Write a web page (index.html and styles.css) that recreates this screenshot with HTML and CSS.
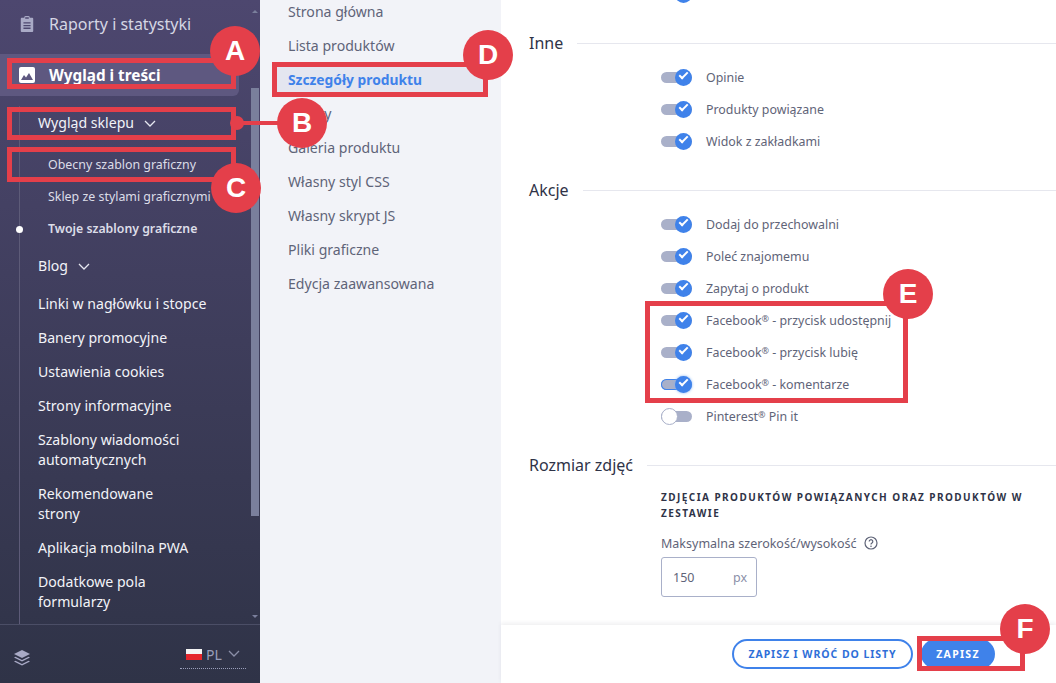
FILE: index.html
```html
<!DOCTYPE html>
<html lang="pl">

<head>
	<meta charset="UTF-8">
	<title>Wygląd i treści</title>
	<link rel="stylesheet" href="styles.css">
</head>

<body>
	<aside class="sidebar">
		<nav class="side-nav">
			<a class="main-link">
				<svg class="main-icon" viewBox="0 0 16 18"><path fill="#a9aac6" d="M2 2h3V1.500A1.500 1.500 0 0 1 6.500 0h3A1.500 1.500 0 0 1 11 1.500V2h3a1 1 0 0 1 1 1v14a1 1 0 0 1-1 1H2a1 1 0 0 1-1-1V3a1 1 0 0 1 1-1z"/><path fill="#4d476f" d="M4 7h8v1.500H4zM4 10h8v1.500H4zM4 13h8v1.500H4zM6 1.500h4V3H6z"/></svg>
				Raporty i statystyki
			</a>
			<a class="main-link active">
				<svg class="main-icon" viewBox="0 0 16 16"><rect width="16" height="16" rx="2" fill="#fff"/><path fill="#5e5880" d="M2 13l3-5 2 2.500L10 6l4 7z"/></svg>
				Wygląd i treści
			</a>
			<div class="tree">
				<a class="tree-link first">Wygląd sklepu <svg class="chev" viewBox="0 0 12 7"><path d="M1 1l5 5 5-5"/></svg></a>
				<div class="sub-list">
					<a class="sub-link">Obecny szablon graficzny</a>
					<a class="sub-link">Sklep ze stylami graficznymi</a>
					<a class="sub-link current">Twoje szablony graficzne</a>
				</div>
				<a class="tree-link blog">Blog <svg class="chev" viewBox="0 0 12 7"><path d="M1 1l5 5 5-5"/></svg></a>
				<a class="tree-link">Linki w nagłówku i stopce</a>
				<a class="tree-link">Banery promocyjne</a>
				<a class="tree-link">Ustawienia cookies</a>
				<a class="tree-link">Strony informacyjne</a>
				<a class="tree-link">Szablony wiadomości<br>automatycznych</a>
				<a class="tree-link">Rekomendowane<br>strony</a>
				<a class="tree-link">Aplikacja mobilna PWA</a>
				<a class="tree-link">Dodatkowe pola<br>formularzy</a>
			</div>
			<div class="scrollbar">
				<span class="arrow up"></span>
				<span class="thumb"></span>
				<span class="arrow down"></span>
			</div>
		</nav>
		<div class="side-foot">
			<svg class="layers" viewBox="0 0 16 16"><path fill="#a9aac6" d="M8 0l8 4-8 4-8-4z"/><path fill="#a9aac6" d="M1.500 6.700L8 10l6.500-3.300L16 7.500l-8 4-8-4z"/><path fill="#a9aac6" d="M1.500 10.700L8 14l6.500-3.300 1.500.8-8 4-8-4z"/></svg>
			<div class="lang">
				<span class="flag"></span>
				<span>PL</span>
				<svg class="chev dim" viewBox="0 0 12 7"><path d="M1 1l5 5 5-5"/></svg>
			</div>
		</div>
	</aside>

	<div class="subnav">
		<a class="subnav-link">Strona główna</a>
		<a class="subnav-link">Lista produktów</a>
		<a class="subnav-link active">Szczegóły produktu</a>
		<a class="subnav-link">Opłaty</a>
		<a class="subnav-link">Galeria produktu</a>
		<a class="subnav-link">Własny styl CSS</a>
		<a class="subnav-link">Własny skrypt JS</a>
		<a class="subnav-link">Pliki graficzne</a>
		<a class="subnav-link">Edycja zaawansowana</a>
	</div>

	<main class="content">
		<div class="form-area">
			<div class="toggle-row cut">
				<span class="toggle on"></span><span>Zakup</span>
			</div>

			<h2 class="section-title first">Inne</h2>
			<div class="toggle-row"><span class="toggle on"></span><span>Opinie</span></div>
			<div class="toggle-row"><span class="toggle on"></span><span>Produkty powiązane</span></div>
			<div class="toggle-row"><span class="toggle on"></span><span>Widok z zakładkami</span></div>

			<h2 class="section-title">Akcje</h2>
			<div class="toggle-row"><span class="toggle on"></span><span>Dodaj do przechowalni</span></div>
			<div class="toggle-row"><span class="toggle on"></span><span>Poleć znajomemu</span></div>
			<div class="toggle-row"><span class="toggle on"></span><span>Zapytaj o produkt</span></div>
			<div class="toggle-row"><span class="toggle on"></span><span>Facebook<span class="reg">®</span> - przycisk udostępnij</span></div>
			<div class="toggle-row"><span class="toggle on"></span><span>Facebook<span class="reg">®</span> - przycisk lubię</span></div>
			<div class="toggle-row"><span class="toggle on focus"></span><span>Facebook<span class="reg">®</span> - komentarze</span></div>
			<div class="toggle-row"><span class="toggle"></span><span>Pinterest<span class="reg">®</span> Pin it</span></div>

			<h2 class="section-title">Rozmiar zdjęć</h2>
			<div class="field">
				<h3 class="field-title">Zdjęcia produktów powiązanych oraz produktów w zestawie</h3>
				<label class="field-label">Maksymalna szerokość/wysokość
					<svg class="help" viewBox="0 0 14 14"><circle cx="7" cy="7" r="6" fill="none" stroke="#5f6478" stroke-width="1.200"/><path d="M5.200 5.500a1.800 1.800 0 1 1 2.700 1.600c-.6.300-.9.600-.9 1.300" fill="none" stroke="#5f6478" stroke-width="1.200"/><circle cx="7" cy="10.300" r=".8" fill="#5f6478"/></svg>
				</label>
				<div class="num-input"><span>150</span><span class="unit">px</span></div>
			</div>
		</div>
		<footer class="actions">
			<button class="btn outline">Zapisz i wróć do listy</button>
			<button class="btn solid">Zapisz</button>
		</footer>
	</main>

	<!-- annotations over the screenshot -->
	<div class="mark" style="left:7px;top:58px;width:229px;height:31px"></div>
	<div class="mark" style="left:7px;top:107px;width:229px;height:33px"></div>
	<div class="mark" style="left:7px;top:147px;width:229px;height:35px"></div>
	<div class="mark" style="left:272px;top:62px;width:216px;height:35px"></div>
	<div class="mark" style="left:645px;top:301px;width:263px;height:102px"></div>
	<div class="mark" style="left:917px;top:636px;width:108px;height:35px"></div>
	<div class="connector"></div>
	<div class="pin"></div>
	<div class="badge" style="left:210px;top:26px">A</div>
	<div class="badge" style="left:277px;top:98px">B</div>
	<div class="badge" style="left:211px;top:163px">C</div>
	<div class="badge" style="left:463px;top:30px">D</div>
	<div class="badge" style="left:883px;top:269px">E</div>
	<div class="badge" style="left:1000px;top:604px">F</div>
</body>

</html>
```

FILE: styles.css
```css
*,
*::before,
*::after {
	box-sizing: border-box;
}

html,
body {
	height: 100%;
}

body {
	margin: 0;
	display: flex;
	height: 683px;
	overflow: hidden;
	font-family: "Noto Sans", sans-serif;
	font-size: 13px;
	color: #5f6478;
	background-color: #fff;
	position: relative;
}

/* left menu */
.sidebar {
	width: 260px;
	flex: none;
	display: flex;
	flex-direction: column;
	background: linear-gradient(#4d476f, #2f3347);
	color: #f2f3f8;
}

.side-nav {
	flex: 1;
	position: relative;
	overflow: hidden;
	padding-top: 14px;
}

.main-link {
	display: flex;
	align-items: center;
	gap: 14px;
	height: 20px;
	padding-left: 19px;
	font-size: 16px;
	color: #d5d6e4;
}

.main-link.active {
	width: 239px;
	height: 42px;
	margin-top: 20px;
	background-color: #5e5880;
	border-radius: 0 6px 6px 0;
	font-size: 15.300px;
	color: #fff;
	font-weight: 700;
}

.main-icon {
	width: 16px;
	height: 16px;
}

.tree {
	margin: 10px 0 0 19px;
	padding-left: 18px;
	border-left: 1px solid #5d5b78;
	height: 520px;
	display: flex;
	flex-direction: column;
	gap: 14px;
}

.tree-link {
	display: block;
	line-height: 20px;
	font-size: 14.100px;
	color: #f2f3f8;
}

.tree-link.first {
	margin-top: 7px;
}

.tree-link.blog {
	margin-bottom: 4px;
}

.chev {
	width: 12px;
	height: 7px;
	margin: 0 0 1px 6px;
	fill: none;
	stroke: #e6e7f0;
	stroke-width: 1.300;
}

.chev.dim {
	stroke: #8b8fa8;
	margin-left: 2px;
}

.sub-list {
	display: flex;
	flex-direction: column;
	gap: 12px;
	margin-top: 8px;
	margin-bottom: 3px;
}

.sub-link {
	display: block;
	line-height: 20px;
	padding-left: 10px;
	font-size: 12.400px;
	color: #dcdde8;
	white-space: nowrap;
	position: relative;
}

.sub-link.current {
	font-weight: 600;
	font-size: 12.300px;
}

.sub-link.current::before {
	content: "";
	position: absolute;
	left: -22px;
	top: 7px;
	width: 7px;
	height: 7px;
	border-radius: 50%;
	background-color: #fff;
}

.scrollbar {
	position: absolute;
	top: 0;
	right: 0;
	bottom: 0;
	width: 9px;
}

.thumb {
	position: absolute;
	top: 88px;
	left: 0;
	width: 8px;
	height: 428px;
	background-color: #7a7f9c;
}

.arrow {
	position: absolute;
	left: 1px;
	border-left: 3px solid transparent;
	border-right: 3px solid transparent;
}

.arrow.up {
	top: 10px;
	border-bottom: 3px solid #7a7f9c;
}

.arrow.down {
	bottom: 6px;
	border-top: 3px solid #7a7f9c;
}

.side-foot {
	height: 59px;
	flex: none;
	border-top: 1px solid #4b4e66;
	display: flex;
	align-items: flex-start;
	justify-content: space-between;
	padding: 25px 14px 0 14px;
}

.layers {
	width: 16px;
	height: 16px;
}

.lang {
	width: 66px;
	height: 25px;
	display: flex;
	align-items: center;
	gap: 4px;
	padding: 0 0 4px 6px;
	margin-top: -6px;
	font-size: 14px;
	color: #9a9fbb;
	border-bottom: 1px dotted #9a9fbb;
}

.flag {
	width: 16px;
	height: 11px;
	background: linear-gradient(#f4f4f4 50%, #e5262c 50%);
}

/* second column */
.subnav {
	width: 241px;
	flex: none;
	display: flex;
	flex-direction: column;
	padding: 2px 15px 0 14px;
	background-color: #f2f3f8;
}

.subnav-link {
	height: 34px;
	line-height: 20px;
	padding: 0 14px;
	font-size: 14.100px;
	color: #5f6478;
}

.subnav-link.active {
	line-height: 34px;
	background-color: #e4e6f0;
	color: #3f82ea;
	font-size: 13.800px;
	font-weight: 700;
	margin: -7px 0 7px;
}

/* form */
.content {
	flex: 1;
	position: relative;
	display: flex;
	flex-direction: column;
	min-width: 0;
}

.form-area {
	flex: 1;
	padding: 0 0 0 28px;
	overflow: hidden;
	min-height: 0;
}

.section-title {
	display: flex;
	align-items: center;
	gap: 14px;
	margin: 21px 0 6px;
	height: 24px;
	font-size: 16px;
	font-weight: 400;
	color: #2f3347;
}

.section-title::after {
	content: "";
	flex: 1;
	height: 1px;
	background-color: #e6e7ee;
}

.section-title.first {
	margin-top: 31px;
}

.toggle-row {
	display: flex;
	align-items: center;
	gap: 14px;
	height: 32px;
	margin-left: 132px;
	font-size: 12.400px;
	color: #5f6478;
}

.toggle-row.cut {
	height: 16px;
	margin-top: -16px;
	align-items: flex-end;
}

.reg {
	font-size: 9px;
	line-height: 0;
	vertical-align: 3px;
}

.toggle {
	position: relative;
	width: 31px;
	height: 11px;
	border-radius: 6px;
	background-color: #a9b0c9;
}

.toggle::after {
	content: "";
	position: absolute;
	left: 0;
	top: -3px;
	width: 17px;
	height: 17px;
	border: 1px solid #a9b0c9;
	border-radius: 50%;
	background-color: #fff;
}

.toggle.on::after {
	left: auto;
	right: 0;
	border: 0;
	background-color: #3f82ea;
}

.toggle.on::before {
	content: "";
	position: absolute;
	z-index: 1;
	right: 4px;
	top: 0;
	width: 9px;
	height: 5px;
	border-left: 2px solid #fff;
	border-bottom: 2px solid #fff;
	transform: rotate(-45deg);
}

.toggle.focus {
	box-shadow: inset 0 0 0 1px #3f82ea;
}

.toggle.focus::after {
	box-shadow: 0 0 3px #7fb0f5;
}

.field {
	margin: 12px 0 0 132px;
}

.field-title {
	margin: 0 0 12px;
	width: 370px;
	font-size: 10px;
	line-height: 16px;
	font-weight: 700;
	letter-spacing: 1.450px;
	text-transform: uppercase;
	color: #2f3347;
}

.field-label {
	display: flex;
	align-items: center;
	gap: 7px;
	height: 20px;
	font-size: 12.500px;
}

.help {
	width: 14px;
	height: 14px;
}

.num-input {
	width: 96px;
	height: 40px;
	margin-top: 4px;
	display: flex;
	align-items: center;
	justify-content: space-between;
	padding: 0 9px 0 11px;
	border: 1px solid #a9b0c9;
	border-radius: 3px;
	font-size: 12.500px;
}

.unit {
	color: #8b8fa8;
}

.actions {
	height: 58px;
	flex: none;
	display: flex;
	align-items: center;
	gap: 8px;
	padding: 0 60px 0 231px;
	background-color: #fff;
	box-shadow: 0 -2px 4px rgba(47, 51, 71, 0.08);
}

.btn {
	height: 30px;
	padding: 0 10px;
	border-radius: 15px;
	font-family: inherit;
	font-size: 10.500px;
	font-weight: 700;
	letter-spacing: 1.300px;
	text-transform: uppercase;
	white-space: nowrap;
}

.btn.outline {
	width: 181px;
	background-color: #fff;
	border: 2px solid #3f82ea;
	color: #2f6fd8;
	letter-spacing: 0.950px;
}

.btn.solid {
	width: 74px;
	border: 0;
	background-color: #3f82ea;
	color: #fff;
}

/* red help marks */
.mark {
	position: absolute;
	border: 5px solid #e43f4a;
}

.connector {
	position: absolute;
	left: 236px;
	top: 121px;
	width: 44px;
	height: 4px;
	background-color: #e43f4a;
}

.pin {
	position: absolute;
	left: 230px;
	top: 116px;
	width: 14px;
	height: 14px;
	border-radius: 50%;
	background-color: #e43f4a;
}

.badge {
	position: absolute;
	width: 50px;
	height: 50px;
	border-radius: 50%;
	background-color: #e43f4a;
	color: #fff;
	font-family: "Liberation Sans", sans-serif;
	font-size: 28px;
	font-weight: 700;
	line-height: 50px;
	text-align: center;
}
```
